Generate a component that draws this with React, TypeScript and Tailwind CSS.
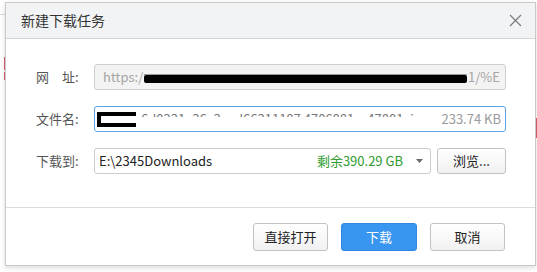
import React from "react";

const font = { fontFamily: '"Noto Sans CJK SC", "Noto Sans", sans-serif' };

function Btn({ children, primary }: { children: React.ReactNode; primary?: boolean }) {
  return (
    <button
      className={
        primary
          ? "h-[28px] w-[76px] rounded-[3px] border border-[#2f86e0] bg-[#3895f0] text-[13px] text-white"
          : "h-[28px] w-[75px] rounded-[3px] border border-[#c2c2c2] bg-gradient-to-b from-white to-[#f1f1f1] text-[13px] text-[#222]"
      }
    >
      {children}
    </button>
  );
}

function Label({ children }: { children: React.ReactNode }) {
  return <div className="w-[58px] shrink-0 text-[13px] text-[#555]">{children}</div>;
}

export default function App() {
  return (
    <div className="relative h-[272px] w-[537px] overflow-hidden bg-white" style={font}>
      {/* background page behind the dialog */}
      <div className="absolute left-0 top-[14px] h-px w-[6px] bg-[#d8d8d8]" />
      <div className="absolute left-[4px] top-[57px] h-[13px] w-[2px] bg-[#e0606a]" />
      <div className="absolute left-[4px] top-[72px] h-[8px] w-[2px] bg-[#e0606a]" />
      <div className="absolute right-0 top-[118px] h-[20px] w-[1px] bg-[#e0606a]" />

      <div className="relative ml-[5px] mt-[2px] flex h-[264px] w-[531px] flex-col border border-[#c9c9c9] bg-white shadow-[0_2px_5px_rgba(0,0,0,0.14)]">
        {/* title bar */}
        <div className="flex h-[36px] shrink-0 items-center justify-between border-b border-[#d4d4d4] bg-[#f2f3f5] pl-[15px] pr-[13px]">
          <span className="text-[14px] text-[#333]">新建下载任务</span>
          <svg width="13" height="13" viewBox="0 0 13 13">
            <path d="M1 1 L12 12 M12 1 L1 12" stroke="#7a7a7a" strokeWidth="1.2" fill="none" />
          </svg>
        </div>

        {/* body */}
        <div className="flex h-[168px] shrink-0 flex-col gap-[16px] pl-[30px] pr-[29px] pt-[25px]">
          <div className="flex h-[26px] items-center">
            <Label>网　址:</Label>
            <div className="flex h-[26px] min-w-0 flex-1 items-center overflow-hidden rounded-[3px] border border-[#cfcfcf] bg-[#f3f3f3] pl-[8px] pr-[5px] text-[13px] text-[#a5a5a5]">
              <span className="shrink-0">https:/</span>
              <div className="ml-[1px] mr-[1px] mt-[3px] flex min-w-0 flex-1 flex-col">
                <div className="h-px w-full bg-[#9a9a9a]" />
                <div className="h-[8px] w-full rounded-[2px] bg-black" />
              </div>
              <span className="shrink-0">1/%E</span>
            </div>
          </div>

          <div className="flex h-[26px] items-center">
            <Label>文件名:</Label>
            <div className="flex h-[26px] min-w-0 flex-1 items-center overflow-hidden rounded-[3px] border border-[#5ea3e8] bg-white pl-[2px] pr-[4px] text-[13px]">
              <div className="h-[15px] w-[39px] shrink-0 border-y-[4px] border-l-[4px] border-black" />
              <div className="ml-[5px] h-[24px] w-[280px] shrink-0 overflow-hidden">
                <div className="h-[10px] overflow-hidden whitespace-nowrap leading-[24px] text-[#777]">
                  6d0231e36c3eed66311187 4706881 _ 47801 .jpg
                </div>
              </div>
              <span className="ml-auto shrink-0 text-[#9a9a9a]">233.74 KB</span>
            </div>
          </div>

          <div className="flex h-[26px] items-center">
            <Label>下载到:</Label>
            <div className="flex h-[26px] w-[337px] items-center rounded-[3px] border border-[#cccccc] bg-white pl-[4px] pr-[7px] text-[13px]">
              <span className="text-[#222]">E:\2345Downloads</span>
              <span className="ml-auto text-[#2e9b2e]">剩余390.29 GB</span>
              <svg className="ml-[13px]" width="7" height="4" viewBox="0 0 7 4">
                <path d="M0 0 L7 0 L3.5 4 Z" fill="#6a6a6a" />
              </svg>
            </div>
            <button className="ml-[6px] h-[26px] flex-1 rounded-[3px] border border-[#c2c2c2] bg-gradient-to-b from-white to-[#f1f1f1] text-[13px] text-[#222]">
              浏览...
            </button>
          </div>
        </div>

        {/* footer */}
        <div className="flex flex-1 items-start justify-end gap-[13px] border-t border-[#dcdcdc] pr-[30px] pt-[15px]">
          <Btn>直接打开</Btn>
          <Btn primary>下载</Btn>
          <Btn>取消</Btn>
        </div>
      </div>
    </div>
  );
}
